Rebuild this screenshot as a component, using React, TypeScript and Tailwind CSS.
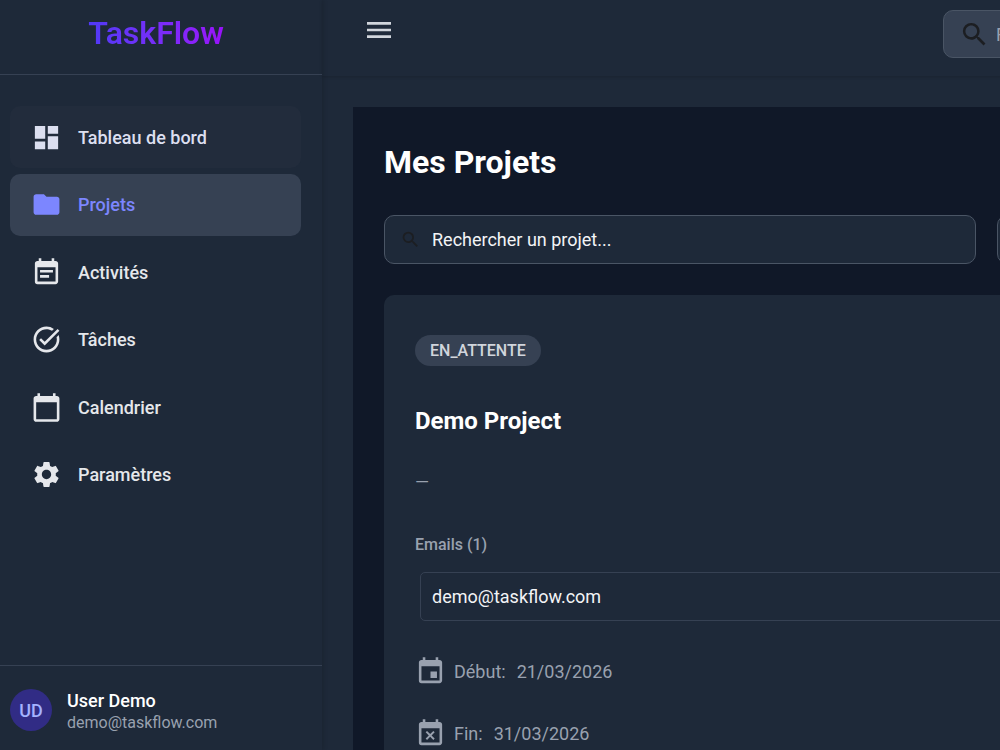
import { useState } from "react";
import type { IconType } from "react-icons";
import {
  MdCalendarToday,
  MdDashboard,
  MdEvent,
  MdEventBusy,
  MdEventNote,
  MdFolder,
  MdMenu,
  MdSearch,
  MdSettings,
  MdTaskAlt,
} from "react-icons/md";

type NavItem = { label: string; icon: IconType; className: string };

const navItems: NavItem[] = [
  { label: "Tableau de bord", icon: MdDashboard, className: "bg-[#222c3c] text-[#dcdff0]" },
  { label: "Projets", icon: MdFolder, className: "bg-gray-700 text-indigo-400" },
  { label: "Activités", icon: MdEventNote, className: "text-gray-200" },
  { label: "Tâches", icon: MdTaskAlt, className: "text-gray-200" },
  { label: "Calendrier", icon: MdCalendarToday, className: "text-gray-200" },
  { label: "Paramètres", icon: MdSettings, className: "text-gray-200" },
];

function Sidebar() {
  return (
    <aside className="relative flex w-[322px] shrink-0 flex-col shadow-[2px_0_4px_rgba(0,0,0,0.12)]">
      <div className="flex h-[75px] shrink-0 items-start justify-center border-b border-gray-700 pt-[13px] pr-[10px]">
        <span className="bg-linear-to-r from-indigo-600 to-purple-600 bg-clip-text text-[32px] leading-10 font-semibold text-transparent">
          TaskFlow
        </span>
      </div>

      <nav className="flex-1 pt-[31px] pr-[21px] pl-[10px]">
        <ul className="flex h-[400px] flex-col justify-between">
          {navItems.map(({ label, icon: Icon, className }) => (
            <li key={label}>
              <a
                href="#"
                className={`flex h-[62px] items-center gap-4 rounded-[10px] px-[21px] text-[18px] font-medium ${className}`}
              >
                <Icon size={31} className="shrink-0" />
                {label}
              </a>
            </li>
          ))}
        </ul>
      </nav>

      <div className="flex items-center gap-[15px] border-t border-gray-700 px-[10px] pt-[22px] pb-[18px]">
        <div className="flex size-[42px] shrink-0 items-center justify-center rounded-full bg-indigo-900 text-[18px] font-medium text-indigo-300">
          UD
        </div>
        <div>
          <p className="text-[18px] leading-[26px] font-medium text-white">User Demo</p>
          <p className="text-[16px] leading-[18px] text-gray-400">demo@taskflow.com</p>
        </div>
      </div>
    </aside>
  );
}

function Header() {
  return (
    <header className="flex h-[76px] shrink-0 items-start justify-between pt-[10px] pr-5 pl-[41px] shadow-[0_1px_3px_rgba(0,0,0,0.15)]">
      <button type="button" aria-label="Menu" className="mt-1 text-gray-300">
        <MdMenu size={32} />
      </button>
      <label className="flex h-12 w-[361px] items-center gap-[6px] rounded-[10px] border border-gray-600 bg-gray-700 pl-[15px]">
        <MdSearch size={31} className="shrink-0 text-[#1c1e22]" />
        <input
          type="search"
          aria-label="Rechercher"
          placeholder="Rechercher..."
          className="min-w-0 flex-1 bg-transparent text-[18px] text-white outline-none placeholder:text-gray-400"
        />
      </label>
    </header>
  );
}

function ProjectCard() {
  return (
    <article className="rounded-[10px] bg-gray-800 px-[31px] py-10">
      <span className="inline-flex h-[31px] items-center rounded-full bg-gray-700 px-[15px] text-[16px] font-medium text-gray-300">
        EN_ATTENTE
      </span>
      <h2 className="mt-[39px] text-[24px] leading-8 font-bold text-white">Demo Project</h2>
      <p className="mt-[31px] text-[18px] leading-7 text-gray-400">—</p>

      <h3 className="mt-[37px] text-[16px] leading-6 font-medium text-gray-400">Emails (1)</h3>
      <ul className="mt-[15px] ml-[5px]">
        <li className="flex h-[49px] items-center rounded-[5px] border border-gray-700 px-[11px] text-[18px] text-gray-100">
          demo@taskflow.com
        </li>
      </ul>

      <dl className="mt-[35px] flex flex-col gap-[31px] text-[18px] text-gray-400">
        <div className="flex h-[31px] items-center">
          <MdEvent size={31} className="shrink-0" />
          <dt className="ml-2">Début:</dt>
          <dd className="ml-[11px]">21/03/2026</dd>
        </div>
        <div className="flex h-[31px] items-center">
          <MdEventBusy size={31} className="shrink-0" />
          <dt className="ml-2">Fin:</dt>
          <dd className="ml-[11px]">31/03/2026</dd>
        </div>
      </dl>
    </article>
  );
}

export default function App() {
  const [query, setQuery] = useState("");

  return (
    <div className="flex h-screen overflow-hidden bg-gray-800 font-[Roboto,sans-serif]">
      <Sidebar />
      <div className="flex min-w-[1002px] flex-1 flex-col">
        <Header />
        <main className="mt-[31px] ml-[31px] flex-1 bg-gray-900 px-[31px] pt-[35px]">
          <h1 className="text-[32px] leading-10 font-bold text-white">Mes Projets</h1>

          <div className="mt-[33px] grid grid-cols-[2fr_1fr] gap-[21px]">
            <label className="flex h-[49px] items-center gap-[11px] rounded-[10px] border border-gray-600 bg-gray-800 px-[15px]">
              <MdSearch size={21} className="shrink-0 text-[#1c1e22]" />
              <input
                type="text"
                aria-label="Rechercher un projet"
                placeholder="Rechercher un projet..."
                value={query}
                onChange={(e) => setQuery(e.target.value)}
                className="min-w-0 flex-1 bg-transparent text-[18px] text-white outline-none placeholder:text-gray-100"
              />
            </label>
            <select
              aria-label="Statut"
              className="h-[49px] rounded-[10px] border border-gray-600 bg-gray-800 px-4 text-[18px] text-white"
            >
              <option>Tous les statuts</option>
            </select>
          </div>

          <section className="mt-[31px]">
            <ProjectCard />
          </section>
        </main>
      </div>
    </div>
  );
}
